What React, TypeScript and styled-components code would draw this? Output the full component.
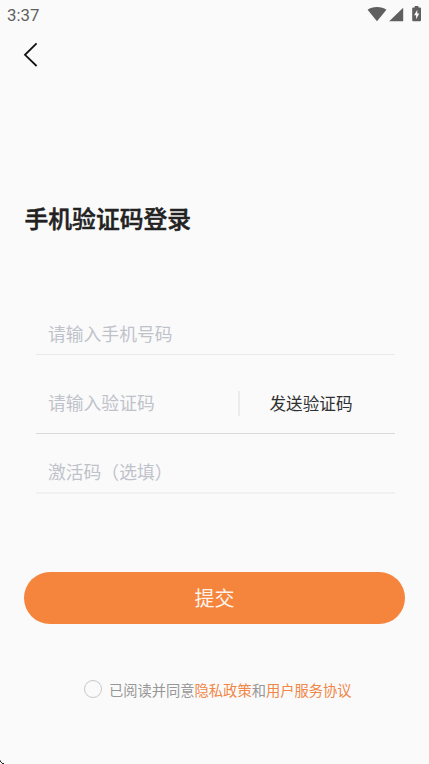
import React, { useState } from "react";
import styled, { createGlobalStyle } from "styled-components";

const GlobalStyle = createGlobalStyle`
  * { box-sizing: border-box; }
  body {
    margin: 0;
    background: #fafafa;
    font-family: "Noto Sans CJK SC", "Noto Sans", sans-serif;
  }
  button { font: inherit; border: 0; padding: 0; background: none; cursor: pointer; }
`;

const Screen = styled.main`
  position: relative;
  display: flex;
  flex-direction: column;
  height: 764px;
  background: #fafafa;
  overflow: hidden;
`;

const StatusBar = styled.header`
  display: flex;
  justify-content: space-between;
  height: 30px;
  padding: 0 7px;
`;

const Clock = styled.span`
  font: 400 16.8px/30px Roboto, sans-serif;
  color: #5f5f5f;
`;

const StatusIcons = styled.svg`
  width: 56px;
  height: 30px;
`;

const NavBar = styled.nav`
  height: 50px;
  padding: 12px 0 0 23px;
`;

const BackButton = styled.button`
  display: block;
  width: 16px;
  height: 26px;

  svg { display: block; }
`;

const Title = styled.h1`
  margin: 120px 0 0 24.5px;
  font-size: 23.8px;
  font-weight: 500;
  line-height: 36px;
  color: #222;
  -webkit-text-stroke: 0.5px #222;
`;

const Form = styled.form`
  display: flex;
  flex-direction: column;
  margin-top: 77px;
`;

const Field = styled.div<{ $height: number; $line: string; $top?: number; $bottom?: number; $thick?: boolean }>`
  display: flex;
  align-items: center;
  height: ${(p) => p.$height}px;
  margin: 0 34px 0 36px;
  padding: ${(p) => p.$top ?? 0}px 0 ${(p) => p.$bottom ?? 0}px 12px;
  border-bottom: ${(p) => (p.$thick ? 2 : 1)}px solid ${(p) => p.$line};
`;

const Input = styled.input`
  flex: 1;
  min-width: 0;
  height: 30px;
  padding: 0;
  border: 0;
  outline: 0;
  background: none;
  font: 400 17.8px/30px "Noto Sans CJK SC", sans-serif;
  color: #222;

  &::placeholder { color: #c0c2ca; opacity: 1; }
`;

const CodeInput = styled(Input)`
  margin-bottom: 2px;
`;

const SendCode = styled.button`
  width: 157px;
  height: 25px;
  padding-right: 13px;
  border-left: 2px solid #ececec;
  font-size: 16.6px;
  line-height: 25px;
  color: #303030;
`;

const Submit = styled.button`
  height: 52px;
  margin: 78px 24px 0;
  padding-bottom: 1px;
  border-radius: 26px;
  background: #f5843c;
  font-size: 20px;
  line-height: 50px;
  color: #fff4eb;
`;

const Agreement = styled.div`
  display: flex;
  align-items: center;
  height: 24px;
  margin: 54px 0 0 84px;
  font-size: 14.27px;
  line-height: 24px;
  color: #979797;
  white-space: nowrap;
`;

const Radio = styled.button<{ $checked: boolean }>`
  width: 18px;
  height: 18px;
  margin: 0 7px 2px 0;
  border: 1px solid #c8c8c8;
  border-radius: 50%;
  background: ${(p) => (p.$checked ? "#f5843c" : "transparent")};
`;

const Link = styled.a`
  color: #f08748;
`;

const Corner = styled.svg`
  position: absolute;
  left: 0;
  bottom: 0;
`;

export default function App() {
  const [agreed, setAgreed] = useState(false);
  return (
    <>
      <GlobalStyle />
      <Screen>
        <StatusBar>
          <Clock>3:37</Clock>
          <StatusIcons viewBox="0 0 56 30" fill="#5f5f5f">
            <path d="M1.6 9.8Q5.3 7 11 7Q16.7 7 20.4 9.8L11 21.3Z" />
            <path d="M37.2 7.7V21.2H23.2Z" />
            <path
              fillRule="evenodd"
              d="M48.7 6h3.7v1.6h1.6q1 0 1 1V20.2q0 1-1 1h-6.8q-1 0-1-1V8.6q0-1 1-1h1.5zM51.3 9.7l-3.2 5.6h2v4l3.2-5.8h-2z"
            />
          </StatusIcons>
        </StatusBar>
        <NavBar>
          <BackButton aria-label="返回">
            <svg width="16" height="26" viewBox="0 0 16 26" fill="none" stroke="#111" strokeWidth="1.8">
              <path d="M13.6 1.4L2 12.8L13.6 24" />
            </svg>
          </BackButton>
        </NavBar>
        <Title>手机验证码登录</Title>
        <Form onSubmit={(e) => e.preventDefault()}>
          <Field $height={42} $line="#e9e9e9" $bottom={2}>
            <Input type="tel" placeholder="请输入手机号码" />
          </Field>
          <Field $height={79} $line="#dadada" $top={18}>
            <CodeInput placeholder="请输入验证码" />
            <SendCode type="button">发送验证码</SendCode>
          </Field>
          <Field $height={60} $line="#f1f1f1" $top={15} $thick>
            <Input placeholder="激活码（选填）" />
          </Field>
          <Submit type="submit">提交</Submit>
        </Form>
        <Agreement>
          <Radio type="button" aria-label="同意" $checked={agreed} onClick={() => setAgreed(!agreed)} />
          已阅读并同意<Link>隐私政策</Link>和<Link>用户服务协议</Link>
        </Agreement>
        <Corner width="4" height="4" viewBox="0 0 4 4" fill="#222">
          <path d="M0 0.5H1V2H2V3H4V4H2V3H1V2H0Z" />
        </Corner>
      </Screen>
    </>
  );
}
